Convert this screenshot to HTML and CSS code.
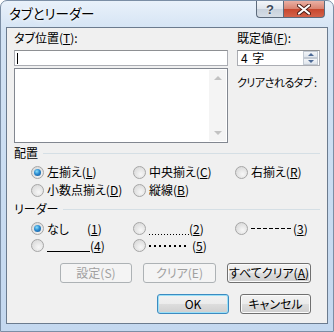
FILE: index.html
```html
<!DOCTYPE html>
<html lang="ja">
<head>
    <meta charset="UTF-8">
    <title>タブとリーダー</title>
    <link rel="stylesheet" href="styles.css">
</head>
<body>

<div class="window">
    <div class="titlebar">
        <span class="title">タブとリーダー</span>
        <div class="caption-btns">
            <div class="cap help">?</div>
            <div class="cap close">
                <svg width="14" height="11" viewBox="0 0 14 11">
                    <path d="M2 1.5 L12 9.5 M12 1.5 L2 9.5" stroke="#4a1b14" stroke-width="4" stroke-linecap="round"/>
                    <path d="M2 1.5 L12 9.5 M12 1.5 L2 9.5" stroke="#fff" stroke-width="2.2" stroke-linecap="round"/>
                </svg>
            </div>
        </div>
    </div>

    <div class="client">
        <div class="top">
            <div class="col-left">
                <div class="label">タブ位置(<u>T</u>):</div>
                <div class="textbox"><span class="caret"></span></div>
                <div class="listbox">
                    <div class="vscroll">
                        <span class="arr up"></span>
                        <span class="arr down"></span>
                    </div>
                </div>
            </div>
            <div class="col-right">
                <div class="label">既定値(<u>F</u>):</div>
                <div class="spin">
                    <span class="spin-val">4 字</span>
                    <div class="spin-btns">
                        <span class="sb up"></span>
                        <span class="sb down"></span>
                    </div>
                </div>
                <div class="note">クリアされるタブ :</div>
            </div>
        </div>

        <div class="group-title"><span>配置</span></div>
        <div class="radios">
            <div class="radio checked"><span class="dot"></span><span>左揃え(<u>L</u>)</span></div>
            <div class="radio"><span class="dot"></span><span>中央揃え(<u>C</u>)</span></div>
            <div class="radio"><span class="dot"></span><span>右揃え(<u>R</u>)</span></div>
            <div class="radio"><span class="dot"></span><span>小数点揃え(<u>D</u>)</span></div>
            <div class="radio"><span class="dot"></span><span>縦線(<u>B</u>)</span></div>
        </div>

        <div class="group-title"><span>リーダー</span></div>
        <div class="radios leaders">
            <div class="radio checked"><span class="dot"></span><span class="lead-text"><span class="lead-none">なし</span>(<u>1</u>)</span></div>
            <div class="radio"><span class="dot"></span><span class="lead-text"><span class="lead dots"></span>(<u>2</u>)</span></div>
            <div class="radio"><span class="dot"></span><span class="lead-text"><span class="lead dash"></span>(<u>3</u>)</span></div>
            <div class="radio"><span class="dot"></span><span class="lead-text"><span class="lead under"></span>(<u>4</u>)</span></div>
            <div class="radio"><span class="dot"></span><span class="lead-text"><span class="lead mid"></span>(<u>5</u>)</span></div>
        </div>

        <div class="btn-row first">
            <div class="btn disabled w72">設定(S)</div>
            <div class="btn disabled w73">クリア(E)</div>
            <div class="btn w84">すべてクリア(<u>A</u>)</div>
        </div>
        <div class="btn-row">
            <div class="btn default w72">OK</div>
            <div class="btn w71">キャンセル</div>
        </div>
    </div>
</div>

</body>
</html>
```

FILE: styles.css
```css
body {
    margin: 0;
    font-family: "Noto Sans CJK JP", "Noto Sans", sans-serif;
    font-size: 12px;
    font-feature-settings: "palt";
    color: #000;
    background-color: #fff;
}
.window {
    width: 334px;
    height: 332px;
    box-sizing: border-box;
    border: 1px solid #7b8ea5;
    border-radius: 7px 7px 0 0;
    background: linear-gradient(#e9f1fa, #d3e3f4 30px, #c9dcf1 60%, #c4d8ef);
    padding: 0 5px 7px 5px;
    display: flex;
    flex-direction: column;
}
.titlebar {
    height: 26px;
    display: flex;
    justify-content: space-between;
    align-items: flex-start;
}
.title {
    margin: 4px 0 0 3px;
    font-size: 13.5px;
    line-height: 16px;
    text-shadow: 0 0 6px #fff, 0 0 3px #fff;
}
.caption-btns {
    display: flex;
    margin-right: 3px;
}
.cap {
    height: 17px;
    box-sizing: border-box;
    border: 1px solid #5d6b7c;
    border-top: none;
    display: flex;
    align-items: center;
    justify-content: center;
}
.help {
    width: 27px;
    border-radius: 0 0 0 4px;
    border-right: none;
    background: linear-gradient(#f3f6f9, #dfe5ec 50%, #c8d1dc 50%, #d6dde6);
    color: #3d4a5a;
    font-family: "Liberation Sans", sans-serif;
    font-weight: bold;
    font-size: 13px;
    text-shadow: 0 0 2px #fff;
}
.close {
    width: 42px;
    border-radius: 0 0 4px 0;
    background: linear-gradient(#eab0a4, #d9826f 50%, #c7462d 50%, #d3624a);
}
.client {
    height: 297px;
    box-sizing: border-box;
    border: 1px solid #6b7b8e;
    background-color: #f0f0f0;
    padding: 3px 7px 0 7px;
    display: flex;
    flex-direction: column;
}
.top {
    display: grid;
    grid-template-columns: 214px 83px;
    gap: 9px;
}
.label {
    height: 14px;
    line-height: 14px;
    margin-bottom: 5px;
}
.textbox {
    height: 16px;
    box-sizing: border-box;
    border: 1px solid #abadb3;
    border-top-color: #8e9093;
    background-color: #fff;
    position: relative;
}
.caret {
    position: absolute;
    left: 2px;
    top: 2px;
    width: 1px;
    height: 11px;
    background-color: #000;
}
.listbox {
    margin-top: 2px;
    height: 75px;
    box-sizing: border-box;
    border: 1px solid #828790;
    background-color: #fff;
    display: flex;
    justify-content: flex-end;
    padding: 1px;
}
.vscroll {
    width: 17px;
    background-color: #f4f4f4;
    display: flex;
    flex-direction: column;
    justify-content: space-between;
    align-items: center;
    padding: 6px 0;
}
.arr {
    width: 0;
    height: 0;
    border-left: 4px solid transparent;
    border-right: 4px solid transparent;
}
.arr.up { border-bottom: 4px solid #c2c2c2; }
.arr.down { border-top: 4px solid #c2c2c2; }
.spin {
    height: 16px;
    box-sizing: border-box;
    border: 1px solid #abadb3;
    border-top-color: #8e9093;
    background-color: #fff;
    display: flex;
    justify-content: space-between;
}
.spin-val {
    padding-left: 3px;
    line-height: 14px;
    word-spacing: 2px;
}
.spin-btns {
    width: 15px;
    margin: 0 1px 0 0;
    display: flex;
    flex-direction: column;
}
.sb {
    flex: 1;
    box-sizing: border-box;
    border: 1px solid #c3cad3;
    background: linear-gradient(#f3f5f8, #dfe5ec);
    display: flex;
    align-items: center;
    justify-content: center;
}
.sb::after {
    content: "";
    border-left: 3px solid transparent;
    border-right: 3px solid transparent;
}
.sb.up::after { border-bottom: 3px solid #4d6a96; }
.sb.down::after { border-top: 3px solid #4d6a96; }
.note {
    margin-top: 9px;
    line-height: 14px;
    font-size: 11px;
    white-space: nowrap;
    letter-spacing: -0.5px;
}
.group-title {
    margin-top: 3px;
    height: 14px;
    line-height: 14px;
    display: flex;
    align-items: center;
}
.group-title::after {
    content: "";
    flex: 1;
    border-top: 1px solid #d5dfe5;
    margin: 1px 0 0 5px;
}
.radios {
    margin-top: 3px;
    padding-left: 17px;
    display: grid;
    grid-template-columns: 102px 102px 1fr;
    grid-auto-rows: 18px;
}
.radios.leaders {
    margin-top: 4px;
    grid-auto-rows: 17px;
}
.radio {
    display: flex;
    align-items: center;
    gap: 3px;
    white-space: nowrap;
    line-height: 14px;
}
.dot {
    width: 13px;
    height: 13px;
    box-sizing: border-box;
    border-radius: 50%;
    border: 1px solid #a6a6a6;
    background: radial-gradient(circle at 60% 65%, #f7f7f7 0, #e6e6e6 45%, #d3d3d3 100%);
    display: flex;
    align-items: center;
    justify-content: center;
}
.radio.checked .dot::after {
    content: "";
    width: 7px;
    height: 7px;
    border-radius: 50%;
    background: radial-gradient(circle at 40% 35%, #8be0fb 0, #2a8ad0 45%, #14508f 100%);
}
.lead-text {
    display: flex;
    align-items: center;
}
.lead-none {
    width: 40px;
}
.lead {
    display: inline-block;
    height: 12px;
    box-sizing: border-box;
}
.lead.dots {
    width: 40px;
    background: repeating-linear-gradient(90deg, #000 0 1px, transparent 1px 3px) bottom left / 100% 1px no-repeat;
    margin-top: 1px;
}
.lead.dash {
    width: 42px;
    background: repeating-linear-gradient(90deg, #000 0 4px, transparent 4px 6px) left center / 100% 1px no-repeat;
}
.lead.under {
    width: 43px;
    border-bottom: 1px solid #000;
    margin-top: 1px;
}
.lead.mid {
    width: 38px;
    margin-right: 5px;
    background: repeating-linear-gradient(90deg, #000 0 2px, transparent 2px 5px) left center / 100% 2px no-repeat;
}
.btn-row {
    margin-top: 11px;
    display: flex;
    justify-content: flex-end;
    gap: 11px;
    padding-right: 9px;
}
.btn-row.first { margin-top: 9px; }
.btn {
    height: 20px;
    box-sizing: border-box;
    border: 1px solid #707070;
    border-radius: 3px;
    background: linear-gradient(#f2f2f2, #ebebeb 50%, #dddddd 50%, #cfcfcf);
    box-shadow: inset 0 0 0 1px #fbfbfb;
    display: flex;
    align-items: center;
    justify-content: center;
    line-height: 14px;
    white-space: nowrap;
}
.btn.disabled {
    border-color: #adb2b5;
    background: #f4f4f4;
    box-shadow: none;
    color: #a0a0a0;
}
.btn.default {
    border-color: #3c8bc1;
    box-shadow: inset 0 0 0 1px #9be0f7;
}
.w71 { width: 71px; }
.w72 { width: 72px; }
.w73 { width: 73px; }
.w84 { width: 84px; }
```
